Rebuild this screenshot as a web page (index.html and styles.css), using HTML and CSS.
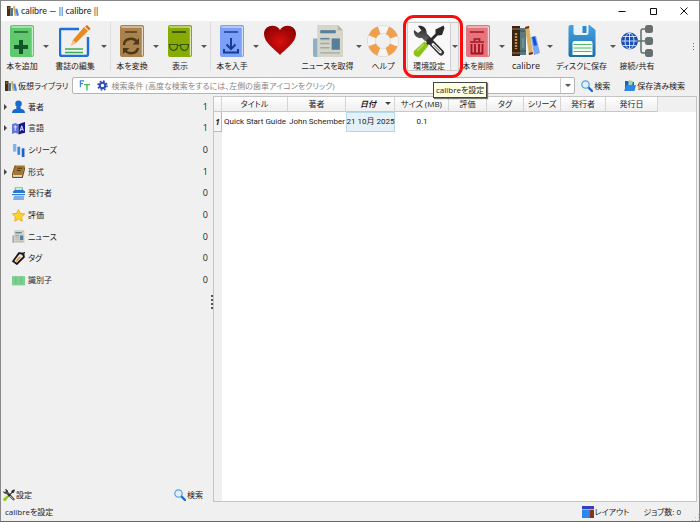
FILE: index.html
```html
<!DOCTYPE html>
<html lang="ja">
<head>
<meta charset="utf-8">
<title>calibre — || calibre ||</title>
<link rel="stylesheet" href="styles.css">
</head>
<body>
<svg class="defs" aria-hidden="true">
  <linearGradient id="steel" x1="0" y1="0" x2="0" y2="1"><stop offset="0" stop-color="#222"/><stop offset="1" stop-color="#666"/></linearGradient>
  <radialGradient id="red" cx=".5" cy=".55" r=".6"><stop offset="0" stop-color="#d81010"/><stop offset="1" stop-color="#8e0000"/></radialGradient>
  <linearGradient id="disk" x1="0" y1="0" x2="0" y2="1"><stop offset="0" stop-color="#45a3e0"/><stop offset="1" stop-color="#1d6dad"/></linearGradient>
  <symbol id="book" viewBox="0 0 24 32">
    <rect width="24" height="32" rx="2" fill="currentColor"/>
    <path d="M1.5 2H22.3V30.5" fill="none" stroke="#fff" stroke-opacity=".85"/>
  </symbol>
  <symbol id="tools" viewBox="0 0 32 32">
    <path d="M12 11L28 27.5" stroke="#333" stroke-width="6" stroke-linecap="round"/>
    <path d="M20 19.5L27.5 27" stroke="#fff" stroke-width="2.6" stroke-linecap="round"/>
    <path d="M20.5 20L27 26.5" stroke="#555" stroke-width="1"/>
    <path d="M5 1C9 -.5 14.500 3 13.500 9L16 13L12 16L9 13C4 14 0 10 1 5L5 8L8.500 5.500Z" fill="url(#steel)"/>
    <path d="M30.500 0.500L31.500 3L29 10L24.500 10.500L14 21L12 19L22.500 8.500L22.500 4.500Z" fill="#2b2b2b"/>
    <path d="M11.500 16.500L15.500 20.500L7 31C4 34 -1.500 29 1.500 25.500Z" fill="#8cc21c"/>
    <path d="M4 26L11 19" stroke="#b8e04a" stroke-width="1.500"/>
  </symbol>
  <symbol id="lens" viewBox="0 0 12 12">
    <path d="M7 7L11 11" stroke="#1769c6" stroke-width="2.400" stroke-linecap="round"/>
    <circle cx="4.500" cy="4.500" r="3.700" fill="#e4f2fd" stroke="#5a9ee0" stroke-width="1.200"/>
  </symbol>
  <symbol id="shelf" viewBox="0 0 12 12">
    <path d="M0 1H3.500V11H0Z" fill="#4b2d17"/><path d="M1 3h1.500" stroke="#d29a35"/>
    <path d="M3.500 3H6V11H3.500Z" fill="#53777d"/>
    <path d="M6 1.500L8 1L9.500 10.800L7.600 11Z" fill="#d6ad5c"/>
    <path d="M8.200 4L10.300 3.600L12 10.500L9.800 11Z" fill="#4285f0"/>
  </symbol>
  <symbol id="news" viewBox="0 0 29 31">
    <path d="M0 13H6V31H2Q0 31 0 28Z" fill="#8fb0c4"/>
    <path d="M4 0H24L29 5V31H4Z" fill="#d5d5c9"/><path d="M24 0V5H29Z" fill="#b5b5a8"/>
    <path d="M7 5H22V8H7Z" fill="#557f9b"/><path d="M18 13H26V24H18Z" fill="#557f9b"/>
    <path d="M7 14H16M7 18H16M7 22H16M7 27H26" stroke="#a3a89f" stroke-width="1.400"/><path d="M7 13h9" stroke="#557f9b"/>
  </symbol>
</svg>

<div class="window">
  <header class="titlebar">
    <svg class="i12"><use href="#shelf"/></svg>
    <h1>calibre — || calibre ||</h1>
    <div class="controls">
      <button aria-label="最小化"><svg viewBox="0 0 8 8"><path d="M0.500 4.500H7.500"/></svg></button>
      <button aria-label="最大化"><svg viewBox="0 0 8 8"><path d="M1.500 1.500H7.500V7.500H1.500Z"/></svg></button>
      <button aria-label="閉じる"><svg viewBox="0 0 8 8"><path d="M0.500 0.500L7.500 7.500M7.500 0.500L0.500 7.500"/></svg></button>
    </div>
  </header>

  <nav class="toolbar" aria-label="ツールバー">
    <button class="tool">
      <svg viewBox="0 0 24 32" color="#5fc96d"><use href="#book"/><path d="M4 7H18" stroke="#245b31" stroke-width="1.400"/><path d="M11 15V29M4 22H18" stroke="#14552a" stroke-width="4"/></svg>
      <span>本を追加</span></button>
    <button class="drop" aria-label="本を追加のメニュー"></button>
    <button class="tool mid">
      <svg viewBox="0 0 32 32"><path d="M20 4H2Q1 4 1 5V29Q1 31 3 31H27Q29 31 29 29V12" fill="none" stroke="#1f6fd6" stroke-width="2.400"/><path d="M6 24H24M6 27.500H24" stroke="#3dae50" stroke-width="1.300"/><path d="M25 2L29 6L17 18L12 20.500L14 15Z" fill="#ea8a1c"/><path d="M26 1.500L28 0L31.500 3.500L30 5.500Z" fill="#e06f10"/><path d="M14 15L17 18L12 20.500Z" fill="#f5c58b"/></svg>
      <span>書誌の編集</span></button>
    <button class="drop" aria-label="書誌の編集のメニュー"></button>
    <i class="sep line"></i>
    <button class="tool">
      <svg viewBox="0 0 24 32" color="#aa824e"><use href="#book"/><path d="M5 7H17" stroke="#4e3818" stroke-width="1.400"/><g fill="none" stroke="#4e3818" stroke-width="2.400"><path d="M4 20C4 13 14 12 17 17M18 23C17 29 8 30 5 25"/></g><path d="M19 13V19.500H12.500ZM3 29V23H9.500Z" fill="#4e3818"/></svg>
      <span>本を変換</span></button>
    <button class="drop" aria-label="本を変換のメニュー"></button>
    <button class="tool">
      <svg viewBox="0 0 24 32" color="#88aa05"><use href="#book"/><path d="M4 7H18" stroke="#33450a" stroke-width="1.600"/><path d="M1.500 19.500H9.500Q10 25 5.500 25.500Q1.500 25 1.500 19.500ZM12.500 19.500H20.500Q20.500 25 16.500 25.500Q12 25 12.500 19.500ZM9.500 20.500H12.500" fill="none" stroke="#33570c" stroke-width="1.200"/></svg>
      <span>表示</span></button>
    <button class="drop" aria-label="表示のメニュー"></button>
    <i class="sep line"></i>
    <button class="tool">
      <svg viewBox="0 0 24 32" color="#7ba0f6"><use href="#book"/><path d="M4 7H18" stroke="#16409b" stroke-width="1.500"/><path d="M11 13V24M6.500 19.500L11 24L15.500 19.500M4 24V27.500H18V24" fill="none" stroke="#153d93" stroke-width="2"/></svg>
      <span>本を入手</span></button>
    <button class="drop" aria-label="本を入手のメニュー"></button>
    <button class="tool" aria-label="寄付">
      <svg viewBox="0 0 32 32"><path d="M16 30C12 25 0 18 0 9C0 0 12 -2 16 5C20 -2 32 0 32 9C32 18 20 25 16 30Z" fill="url(#red)"/></svg></button>
    <i class="sep"></i>
    <button class="tool wide">
      <svg><use href="#news"/></svg>
      <span>ニュースを取得</span></button>
    <button class="drop" aria-label="ニュースを取得のメニュー"></button>
    <button class="tool">
      <svg viewBox="0 0 32 32"><circle cx="16" cy="16" r="11.500" fill="none" stroke="#cfcfcf" stroke-width="8.500"/><circle cx="16" cy="16" r="11.500" fill="none" stroke="#f4f4f4" stroke-width="7.500"/><circle cx="16" cy="16" r="11.500" fill="none" stroke="#f0a04b" stroke-width="8" stroke-dasharray="9.600 8.464" stroke-dashoffset="-4.200"/></svg>
      <span>ヘルプ</span></button>
    <div class="current">
      <button class="tool mid">
        <svg><use href="#tools"/></svg>
        <span>環境設定</span></button>
      <button class="drop" aria-label="環境設定のメニュー"></button>
      <i class="ring"></i>
      <div class="tooltip" role="tooltip">calibreを設定</div>
    </div>
    <button class="tool">
      <svg viewBox="0 0 24 32" color="#e2757d"><use href="#book"/><path d="M4 7H18" stroke="#ad1020" stroke-width="1.500"/><path d="M4 17H18M8.500 16V14H13.500V16" fill="none" stroke="#a81222" stroke-width="1.700"/><path d="M5.500 19V28.500H16.500V19M9 19V28M13 19V28" fill="none" stroke="#a81222" stroke-width="1.800"/></svg>
      <span>本を削除</span></button>
    <button class="drop" aria-label="本を削除のメニュー"></button>
    <button class="tool latin">
      <svg viewBox="0 0 28 32"><path d="M0 1H8V31H0Z" fill="#3a2418"/><path d="M0 4H8M0 28H8" stroke="#a9783c"/><path d="M4 8V24" stroke="#c7923e" stroke-width="2.400" stroke-dasharray="2 1"/><path d="M8 3H14V30H8Z" fill="#587a7d"/><path d="M8 6H14M8 26H14" stroke="#304d52"/><path d="M11 13V23" stroke="#86a7a9"/><path d="M13 2L17 1L21 29L17 30Z" fill="#d8b15f"/><path d="M13 2L17 1L17.300 3L13.300 4ZM16.700 28L20.700 27L21 29L17 30Z" fill="#7a2817"/><path d="M19 12L24 11L28 28L22 30Z" fill="#77a6fb"/><path d="M20 12L23 11.500L25 20L22 21Z" fill="#1752d0"/></svg>
      <span>calibre</span></button>
    <button class="drop" aria-label="calibreのメニュー"></button>
    <button class="tool wide">
      <svg viewBox="0 0 27 32"><path d="M0 2Q0 0 2 0H21L27 5V30Q27 32 25 32H2Q0 32 0 30Z" fill="url(#disk)"/><path d="M5 0H20V8Q20 10 18 10H7Q5 10 5 8Z" fill="#e9f3fa"/><path d="M14 1H18V8H14Z" fill="#2f88c7"/><path d="M4 18Q4 16 6 16H22Q24 16 24 18V30H4Z" fill="#f5fff4"/><path d="M5 19.500H23M5 23H23M5 26.500H23" stroke="#52b567" stroke-width="1.200"/></svg>
      <span>ディスクに保存</span></button>
    <button class="drop" aria-label="ディスクに保存のメニュー"></button>
    <button class="tool">
      <svg viewBox="0 0 32 32"><path d="M16 16H26M26 4H22Q20 4 20 6V26Q20 28 22 28H26" fill="none" stroke="#5e6e6c" stroke-width="1.500"/><g fill="#66706e"><rect x="24" width="8" height="8" rx="2.500"/><rect x="24" y="12" width="8" height="8" rx="2.500"/><rect x="24" y="24" width="8" height="8" rx="2.500"/></g><circle cx="8.500" cy="16" r="8.500" fill="#1c4db0"/><path d="M8.500 8V24M.5 16H16.500M2 11.500H15M2 20.500H15" stroke="#d7e6ff" stroke-width=".9"/><ellipse cx="8.500" cy="16" rx="4.500" ry="8" fill="none" stroke="#d7e6ff" stroke-width=".9"/></svg>
      <span>接続/共有</span></button>
    <button class="more" aria-label="その他"></button>
  </nav>

  <form class="search">
    <button class="link" type="button"><svg class="i12"><use href="#shelf"/></svg>仮想ライブラリ</button>
    <div class="combo">
      <button class="icon" type="button" aria-label="全文検索"><svg viewBox="0 0 12 12"><path d="M1.500 8V1H5.500M1.500 4H4.500" fill="none" stroke="#3d7fdd" stroke-width="1.300"/><path d="M5.500 5H12M8.700 5V11.500" fill="none" stroke="#42b75a" stroke-width="1.500"/></svg></button>
      <button class="icon" type="button" aria-label="高度な検索"><svg viewBox="0 0 12 12"><circle cx="6" cy="6" r="3" fill="none" stroke="#2d4db4" stroke-width="2.200"/><circle cx="6" cy="6" r="4.900" fill="none" stroke="#2d4db4" stroke-width="1.600" stroke-dasharray="2 1.848"/></svg></button>
      <input type="text" aria-label="検索条件" placeholder="検索条件 (高度な検索をするには、左側の歯車アイコンをクリック)">
      <button class="drop" type="button" aria-label="検索履歴"></button>
    </div>
    <button class="link" type="button"><svg class="i12"><use href="#lens"/></svg>検索</button>
    <button class="link saved" type="button"><svg class="i12" viewBox="0 0 12 12"><path d="M1 1H4L5 2H10V10H1Z" fill="#1b62c0"/><path d="M5 0L9 1L8 6L4 6Z" fill="#9fd6a8"/><path d="M2.500 5H12L10.500 11H0Z" fill="#2d86e3"/></svg>保存済み検索</button>
  </form>

  <main>
    <aside>
      <ul class="tree">
        <li class="parent"><svg viewBox="0 0 12 12"><circle cx="6" cy="3.500" r="3" fill="#1769cf"/><path d="M0 12Q0 8.500 4 8V6H8V8Q12 8.500 12 12Z" fill="#1769cf"/></svg><span>著者</span><b>1</b></li>
        <li class="parent"><svg viewBox="0 0 12 12"><path d="M0 2L3 1L6 2V11L3 10L0 11Z" fill="#6779d8"/><path d="M6 2L9 1L12 0V10L9 10.500L6 11.500Z" fill="#12158c"/><path d="M1.500 4.500H4.500M3 3V8M7.500 8.500L9 3.500L10.500 8M8 7H10" fill="none" stroke="#dfe5ff" stroke-width=".9"/></svg><span>言語</span><b>1</b></li>
        <li><svg viewBox="0 0 12 12"><path d="M1 0H4V7H1Z" fill="#7fb2ee"/><path d="M5 2.500H7.500V10H5Z" fill="#3c86df"/><path d="M9 4H11.500V12H9Z" fill="#1a62c7"/></svg><span>シリーズ</span><b>0</b></li>
        <li class="parent"><svg viewBox="0 0 12 12"><path d="M3 0.500H12L9.500 9.500H1Z" fill="#a47735"/><path d="M3 0.500L.3 9Q0 11.500 1.500 11.500H9.500L12 2" fill="none" stroke="#76511c" stroke-width="1.100"/><path d="M5 3H9.500M4.500 5H8" stroke="#513610"/></svg><span>形式</span><b>1</b></li>
        <li><svg viewBox="0 0 12 12"><path d="M3 3V.7H9.500V3" fill="#f4fff4" stroke="#6dc285"/><path d="M1 4L3 2.500H10L12 4V5.500H1Z" fill="#2878d2"/><path d="M0 6.500H12V7.500H0Z" fill="#2878d2"/><path d="M2 8H11V12H1Z" fill="#79aeea"/></svg><span>発行者</span><b>0</b></li>
        <li><svg viewBox="0 0 12 12"><path d="M6 .5L7.700 4L11.700 4.500L8.800 7.300L9.500 11.300L6 9.400L2.500 11.300L3.200 7.300L.3 4.500L4.300 4Z" fill="#fcd22b" stroke="#e5a316" stroke-width=".7"/></svg><span>評価</span><b>0</b></li>
        <li><svg><use href="#news"/></svg><span>ニュース</span><b>0</b></li>
        <li><svg viewBox="0 0 12 12"><path d="M6.500 1L10.500 1.500L11 4.500L4.500 11L1 8.500Z" fill="#f7e9db" stroke="#181818" stroke-width="1.700"/><path d="M4 8.500L7.500 4.500" stroke="#e48a42" stroke-width="1.500"/><path d="M9 3L12 0" stroke="#222"/></svg><span>タグ</span><b>0</b></li>
        <li><svg viewBox="0 0 12 12"><path d="M0 2H12V10.500H0Z" fill="#7ccf91"/><path d="M3.500 2V9M8.500 2V9" stroke="#5cb97a" stroke-width=".7"/></svg><span>識別子</span><b>0</b></li>
      </ul>
      <i class="splitter"></i>
      <footer>
        <button class="link"><svg class="i12"><use href="#tools"/></svg>設定</button>
        <button class="link"><svg class="i12"><use href="#lens"/></svg>検索</button>
      </footer>
    </aside>
    <section class="books">
      <table>
        <colgroup><col class="c8"><col class="c66"><col class="c58"><col class="c49"><col class="c54"><col class="c38"><col class="c37"><col class="c37"><col class="c45"><col class="c52"><col></colgroup>
        <thead><tr><th></th><th>タイトル</th><th>著者</th><th class="sorted">日付</th><th>サイズ (MB)</th><th>評価</th><th>タグ</th><th>シリーズ</th><th>発行者</th><th>発行日</th><th class="rest"></th></tr></thead>
        <tbody><tr><th scope="row">1</th><td>Quick Start Guide</td><td>John Schember</td><td class="selected">21 10月 2025</td><td>0.1</td><td></td><td></td><td></td><td></td><td></td><td></td></tr></tbody>
      </table>
    </section>
  </main>

  <footer class="status">
    <span>calibreを設定</span>
    <button class="link"><svg class="i12" viewBox="0 0 12 12"><path d="M0 0H12V3H0Z" fill="#3440bd"/><path d="M0 3H12V4H0Z" fill="#f0a070"/><path d="M0 4H8V12H0Z" fill="#2d86ef"/><path d="M8 4H12V12H8Z" fill="#8b3210"/></svg>レイアウト</button>
    <button class="link jobs">ジョブ数: 0</button>
    <i class="grip"></i>
  </footer>
</div>
</body>
</html>
```
FILE: styles.css
```css
* { box-sizing: border-box; }

body {
  margin: 0;
  color: #1c1c1c;
  font: 8px/12px "Open Sans", "Noto Sans CJK JP", sans-serif;
  font-feature-settings: "palt";
}

button, input {
  margin: 0;
  padding: 0;
  border: 0;
  background: none;
  color: inherit;
  font: inherit;
  font-feature-settings: inherit;
}

svg { display: block; flex: none; }
.defs { position: absolute; width: 0; height: 0; }
.i12 { width: 12px; height: 12px; }

.window {
  display: flex;
  flex-direction: column;
  min-height: 100vh;
  border: 1px solid #888;
  border-bottom-color: #666;
  background: #f0f0f0;
}

.titlebar {
  display: flex;
  align-items: center;
  gap: 2px;
  height: 20px;
  padding-left: 6px;
  background: #fff;
}
.titlebar h1 { flex: 1; margin: 0; font-family: Lato, sans-serif; font-size: 9px; font-weight: 400; }
.controls { display: flex; }
.controls button { display: grid; place-items: center; width: 31px; height: 20px; }
.controls svg { width: 8px; height: 8px; fill: none; stroke: #111; }

.toolbar { display: flex; height: 56px; padding: 1px 0 6px 3px; }
.tool {
  display: flex;
  flex: none;
  flex-direction: column;
  align-items: center;
  gap: 3px;
  width: 36px;
  padding-top: 3px;
  white-space: nowrap;
}
.tool svg { width: 32px; height: 32px; }
.tool.mid { width: 46px; }
.tool.wide { width: 51px; }
.tool span { display: flex; justify-content: center; width: 0; }
.latin { font-size: 9px; }

.drop { display: grid; flex: none; place-items: center; width: 12px; }
.drop::before {
  border: 3px solid transparent;
  border-top-color: #555;
  border-bottom: 0;
  content: "";
}
.sep { flex: none; width: 4px; }
.line { border-left: 1px solid #ddd; }

.current { position: relative; display: flex; flex: none; margin: 0 1px 0 6px; }
.current .tool { width: 44px; padding-top: 2px; border: 1px solid #ccc; background: #f9f9f9; }
.current .drop { width: 8px; border: 1px solid #ccc; border-left: 0; }
.ring {
  position: absolute;
  inset: -7px -4px;
  border: 3px solid #f80c0c;
  border-radius: 11px;
}
.tooltip {
  position: absolute;
  z-index: 2;
  top: 60px;
  left: 26px;
  padding: 1px 2px;
  border: 1px solid #444;
  background: #ffffe1;
  box-shadow: 1px 1px 1px #777;
  white-space: nowrap;
}
.more { width: 8px; margin-left: auto; }
.more::before {
  display: block;
  width: 1px;
  height: 8px;
  margin-left: 2px;
  background: repeating-linear-gradient(#666 0 1px, transparent 1px 3px);
  content: "";
}

.search { display: flex; align-items: center; height: 17px; padding: 0 14px 0 4px; }
.link { display: flex; align-items: center; gap: 1px; white-space: nowrap; }
.combo {
  display: flex;
  flex: 1;
  height: 17px;
  margin: 0 6px 0 4px;
  padding-left: 2px;
  border: 1px solid #b4b4b4;
  border-radius: 2px;
  background: #fff;
}
.combo .icon { display: grid; place-items: center; width: 18px; }
.combo .icon svg { width: 11px; height: 11px; }
.combo input { flex: 1; min-width: 0; }
.combo input::placeholder { color: #888; opacity: 1; }
.combo .drop { border-left: 1px solid #ccc; width: 14px; }
.saved { margin-left: 14px; }

main { display: flex; flex: 1; padding: 2px 2px 1px 0; }
aside { display: flex; flex: none; flex-direction: column; width: 212px; }
.tree {
  display: grid;
  grid-auto-rows: 1fr;
  height: 195px;
  margin: 0;
  padding: 0 5px 0 11px;
  list-style: none;
}
.tree li { position: relative; display: flex; align-items: center; gap: 3px; }
.tree svg { width: 13px; height: 13px; }
.tree b { margin-left: auto; font-size: 9px; font-weight: 400; }
.parent::before {
  position: absolute;
  left: -8px;
  border: 3px solid transparent;
  border-right: 0;
  border-left-color: #444;
  content: "";
}
.splitter {
  align-self: flex-end;
  width: 2px;
  height: 14px;
  margin-top: 4px;
  background: repeating-linear-gradient(#555 0 2px, transparent 2px 4px);
}
aside footer { display: flex; justify-content: space-between; margin-top: auto; padding: 0 10px 1px 2px; }

.books {
  flex: 1;
  border: 1px solid #c4c4c4;
  background: linear-gradient(90deg, #f0f0f0 8px, #fff 8px);
}
table { width: 100%; table-layout: fixed; border-collapse: separate; border-spacing: 0; }
.c8 { width: 8px; }
.c66 { width: 66px; }
.c58 { width: 58px; }
.c49 { width: 49px; }
.c54 { width: 54px; }
.c38 { width: 38px; }
.c37 { width: 37px; }
.c45 { width: 45px; }
.c52 { width: 52px; }
th, td { padding: 0; text-align: center; white-space: nowrap; }
td { font-family: Roboto, "Noto Sans CJK JP", sans-serif; }
th { font-weight: 400; }
thead th {
  height: 15px;
  border-right: 1px solid #d4d4d4;
  border-bottom: 1px solid #c8c8c8;
  background: linear-gradient(#fff, #efefef);
}
thead .rest { border: 0; background: #f0f0f0; }
thead .sorted { position: relative; padding-right: 4px; font-style: italic; font-weight: 700; }
.sorted::after {
  position: absolute;
  top: 5px;
  right: 3px;
  border: 3px solid transparent;
  border-top-color: #444;
  border-bottom: 0;
  content: "";
}
tbody th, tbody td { height: 20px; }
tbody th {
  border-right: 1px solid #bbb;
  border-bottom: 1px solid #bbb;
  background: #f6f6f6;
  font-style: italic;
  font-weight: 700;
}
.selected { background: #e5f1f9; box-shadow: inset 0 0 0 1px #b8d8e8; }

.status { display: flex; align-items: center; height: 18px; padding-left: 4px; }
.status > span { flex: 1; }
.jobs { margin: 0 10px 0 14px; }
.grip {
  align-self: flex-end;
  width: 8px;
  height: 8px;
  background: radial-gradient(#bbb 1px, transparent 1px) 0 0 / 3px 3px;
  clip-path: polygon(100% 0, 100% 100%, 0 100%);
}
```
